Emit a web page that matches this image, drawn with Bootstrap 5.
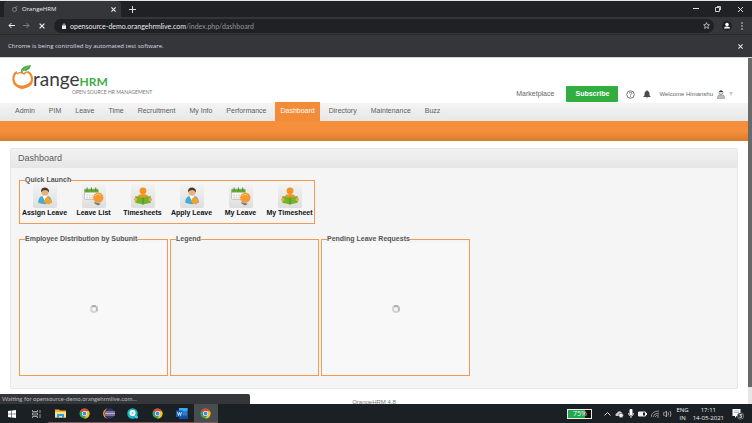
<!DOCTYPE html>
<html lang="en">
<head>
<meta charset="utf-8">
<meta name="viewport" content="width=device-width, initial-scale=1">
<title>OrangeHRM</title>
<link href="https://cdn.jsdelivr.net/npm/bootstrap@5.3.0/dist/css/bootstrap.min.css" rel="stylesheet">
<style>
body{font:7px/10px "Liberation Sans",Arial,sans-serif;color:#666;background:#fff}
button{background:none;border:0;padding:0;color:inherit;line-height:0}
svg{display:block;flex:none}
a{color:inherit;text-decoration:none}
.chrome-ui{font-family:"Open Sans",sans-serif;color:#e8eaed;background:#35363a}
.tabstrip{background:#202124;height:17px;border-top:1px solid #e4e4e4}
.browser-tab{background:#35363a;width:117px;margin-left:4px;border-radius:4px 4px 0 0;font-size:6px}
.toolbar{height:18px;border-bottom:1px solid #292a2d}
.address{background:#202124;border-radius:7px;height:14px;margin-right:8px}
.url-text{font:7px/12px Lato,sans-serif;white-space:nowrap}
.url-text span{color:#92959a}
.infobar{height:22px;font-size:6px;color:#dcdde0}
.viewport-area{min-height:0;border-top:1px solid #d5d5d5}
.site{min-width:0}
.scroll-track{width:4px;background:#e6e6e6}
.scroll-thumb{background:#696969;height:95%}
.site-head{height:45px;padding:6px 15px 0 12px}
.brand-name{font:19px/24px Lato,sans-serif;color:#3a3a3a;padding-top:3px}
.brand-hrm{font-size:12px;color:#3fae49;font-weight:700}
.brand-sub{font:5px/6px Lato,sans-serif;color:#777;margin:-5px 0 0 60px}
.brand-row svg{margin-right:-1px}
.user-links{padding-bottom:1px}
.welcome{font-size:6px}
.subscribe{background:#31ae40;color:#fff;font-weight:700;border-radius:1px;width:52px;height:16px;line-height:10px;margin:0 8px 0 12px}
.main-menu{height:18px;background:linear-gradient(#f4f4f4,#e7e7e7);padding-left:8px}
.main-menu a{padding:0 5px;margin:0 2px;height:19px;line-height:18px;font-size:7px;color:#5d5d5d}
.main-menu a.current{background:#f28c38;color:#fff}
.sub-menu{height:20px;background:linear-gradient(#f58f3b 50%,#d97c2e)}
.panel{margin:7px 10px 0;background:#f5f5f5;border:1px solid #e7e7e7;border-radius:2px}
.panel h1{font-size:9px;line-height:19px;color:#5d5d5d;background:linear-gradient(#f2f2f2,#e6e6e6);padding-left:7px}
.panel-content{padding:8px 8px 12px}
fieldset.framed{border:1px solid #f39a52;padding:0 5px}
fieldset.framed legend{float:none;width:auto;font-size:7px;line-height:8px;font-weight:700;color:#555;margin:0}
.quick{width:296px;height:48px}
.quick-grid{display:grid;grid-template-columns:repeat(6,1fr);margin:0 -5px}
.quick-grid a{color:#111;font-weight:700;white-space:nowrap}
.tile{width:24px;height:24px;border-radius:2px;background:linear-gradient(#f3f3f3,#dedede)}
.widgets{gap:2px;margin-top:11px}
.widget{width:149px;height:141px}
.widget-body{height:100%;margin:0 -5px;background:#f8f8f8}
.spin{width:8px;height:8px;border:2px solid #d4d4d4;border-top-color:#aaa;border-right-color:#bbb;border-radius:50%}
.site-foot{padding-top:8px;color:#777;font-size:6px}
.status-bubble{position:absolute;left:0;bottom:0;width:250px;height:10px;font:6px/10px Lato,sans-serif;color:#b4b8bd;background:#35363a;padding-left:2px;border-radius:0 2px 0 0}
.taskbar{height:19px;background:#1b2024;font-family:"Open Sans",sans-serif;color:#f1f1f1;font-size:6px;line-height:8px}
.apps{width:218px}
.apps button{flex:1 1 0;height:19px;display:flex;align-items:center;justify-content:center}
.apps .running{border-bottom:1px solid #78595c}
.apps .active{background:#494d50}
.battery{width:25px;height:10px;border:1px solid #eee;background:linear-gradient(90deg,#22a84b 75%,#111 75%);line-height:8px;font-size:7px}
.tray{gap:4px}
</style>
</head>
<body class="vh-100 overflow-hidden d-flex flex-column">
<svg class="d-none">
  <defs>
    <symbol id="person" viewBox="0 0 24 24">
      <path d="M4 20q0-7 5-8h6q5 1 5 8-8 3-16 0z" fill="#45acd3"/><path d="M9 12h6l-3 6z" fill="#fff"/>
      <circle cx="12" cy="7.500" r="4" fill="#e9b07c"/><path d="M7.500 8q-1-6 5-6 5 1 4 6-1-3-4-3-4 0-5 3z" fill="#4c3529"/>
      <path d="M12 15l3-2 3 2 2 3-3 4-4-1-2-3z" fill="#f3a32a"/>
    </symbol>
    <symbol id="leave" viewBox="0 0 24 24">
      <rect x="1" y="4" width="16" height="12" rx="1" fill="#fafafa" stroke="#bbb"/><path d="M1 4h16v4H1z" fill="#62a936"/>
      <path d="M4 2v4M9 2v4M14 2v4" stroke="#477d2a"/><path d="M3 11h10M3 14h9" stroke="#bbb" stroke-dasharray="2 1"/>
      <path d="M12 19l8 2-3 2-4-2z" fill="#777"/><circle cx="17" cy="14" r="6" fill="#f49a35"/><path d="M13 12q4-4 7 0" stroke="#ffd08b" fill="none"/>
    </symbol>
    <symbol id="sheet" viewBox="0 0 24 24">
      <circle cx="12" cy="6" r="4" fill="#f39422"/><path d="M5 17q0-7 5-7h4q5 0 5 7z" fill="#f39422"/>
      <path d="M3 12l9 2 9-2v8l-9 2-9-2z" fill="#72b52c"/><path d="M12 14v8" stroke="#43861d"/><circle cx="3.500" cy="16" r="2" fill="#f7a63c"/><circle cx="20.500" cy="16" r="2" fill="#f7a63c"/>
    </symbol>
    <symbol id="chrome" viewBox="0 0 24 24">
      <circle cx="12" cy="12" r="11" fill="#2fa853"/><path d="M12 12L2.500 6.500A11 11 0 0 1 21.500 6.500z" fill="#ea4335"/><path d="M12 7h9.800A11 11 0 0 1 12 23l5-9z" fill="#fbc116"/>
      <circle cx="12" cy="12" r="5.500" fill="#fff"/><circle cx="12" cy="12" r="4.200" fill="#4285f4"/>
    </symbol>
    <symbol id="cross" viewBox="0 0 10 10"><path d="M2 2l6 6M8 2L2 8" stroke="currentColor" stroke-width="1.600"/></symbol>
  </defs>
</svg>

<header class="chrome-ui">
  <div class="tabstrip d-flex justify-content-between">
    <div class="d-flex align-items-stretch">
      <div class="browser-tab d-flex align-items-center ps-2 pe-1">
        <svg width="6" height="6" viewBox="0 0 12 12" fill="none" stroke="#999" stroke-width="1.500"><circle cx="5" cy="7" r="4"/><path d="M6 4q1-3 5-3"/></svg>
        <span class="ms-1 flex-fill">OrangeHRM</span>
        <button aria-label="Close tab"><svg width="7" height="7"><use href="#cross"/></svg></button>
      </div>
      <button class="ms-2" aria-label="New tab"><svg width="7" height="7" viewBox="0 0 7 7" stroke="#ddd"><path d="M3.500 0v7M0 3.500h7"/></svg></button>
    </div>
    <div class="d-flex align-items-center gap-3 pe-2">
      <button aria-label="Minimize"><svg width="6" height="6" viewBox="0 0 6 6" stroke="#ddd"><path d="M0 2.500h6"/></svg></button>
      <button aria-label="Restore"><svg width="6" height="6" viewBox="0 0 6 6" fill="none" stroke="#ccc"><path d="M.5 1.500h4v4h-4zM2 .5h3.500V4"/></svg></button>
      <button aria-label="Close"><svg width="7" height="7" viewBox="0 0 7 7" stroke="#ddd"><path d="M1 1l5 5M6 1L1 6"/></svg></button>
    </div>
  </div>
  <div class="toolbar d-flex align-items-center px-2">
    <button aria-label="Back"><svg width="7" height="7" viewBox="0 0 7 7" stroke="#eee" fill="none"><path d="M7 3.500H1M3.500 1L1 3.500 3.500 6"/></svg></button>
    <button class="ms-2" aria-label="Forward"><svg width="7" height="7" viewBox="0 0 7 7" stroke="#7d8085" fill="none"><path d="M0 3.500h6M3.500 1L6 3.500 3.500 6"/></svg></button>
    <button class="ms-2" aria-label="Stop"><svg width="8" height="8"><use href="#cross"/></svg></button>
    <div class="address d-flex align-items-center flex-fill ms-2 ps-2 pe-1">
      <svg width="4" height="6" viewBox="0 0 4 6"><path d="M0 2.500h4V6H0z" fill="#eee"/><path d="M1 3V1.500q1-1.500 2 0V3" stroke="#eee" stroke-width=".7" fill="none"/></svg>
      <div class="url-text flex-fill ps-1">opensource-demo.orangehrmlive.com<span>/index.php/dashboard</span></div>
      <button aria-label="Bookmark"><svg width="7" height="7" viewBox="0 0 24 24" fill="none" stroke="#ddd" stroke-width="2.500"><path d="M12 2l3 7 7 .6-5.400 4.700L18.500 22 12 18l-6.500 4 1.900-7.700L2 9.600 9 9z"/></svg></button>
    </div>
    <button aria-label="Profile"><svg width="10" height="10" viewBox="0 0 20 20"><circle cx="10" cy="10" r="10" fill="#202124"/><circle cx="10" cy="7" r="3.500" fill="#fff"/><path d="M4 15q0-4 6-4t6 4z" fill="#fff"/></svg></button>
    <button class="ms-2" aria-label="Menu"><svg width="4" height="8" viewBox="0 0 4 8" fill="#ddd"><circle cx="2" cy="1" r=".8"/><circle cx="2" cy="4" r=".8"/><circle cx="2" cy="7" r=".8"/></svg></button>
  </div>
  <div class="infobar d-flex align-items-center justify-content-between px-2">
    <span>Chrome is being controlled by automated test software.</span>
    <button aria-label="Dismiss"><svg width="7" height="7"><use href="#cross"/></svg></button>
  </div>
</header>

<main class="viewport-area d-flex flex-fill position-relative overflow-hidden">
  <div class="site flex-fill">
    <div class="site-head d-flex justify-content-between">
      <div>
        <div class="brand-row d-flex align-items-start">
          <svg width="22" height="26" viewBox="0 0 22 26"><path d="M5 8Q1 10 1.500 16q1 7 9 7.500 9-.5 9.500-7.500 0-6-4-8" fill="none" stroke="#f08a32" stroke-width="2.200"/><path d="M2 16q2 6 9 5.500 6-1 8-5.500-1 8-9 9-7-1-8-9z" fill="#f08a32"/><path d="M5 10q4-3 7 0 3-4 6 0" stroke="#f08a32" stroke-width="1.500" fill="none"/><path d="M9 7q0-5 10-6-1 6-8 6l-1 3z" fill="#42a847"/><path d="M10 7l7-5" stroke="#b5dfad" stroke-width=".6"/></svg>
          <span class="brand-name">range<span class="brand-hrm">HRM</span></span>
        </div>
        <div class="brand-sub">OPEN SOURCE HR MANAGEMENT</div>
      </div>
      <div class="user-links d-flex align-items-end">
        <div class="d-flex align-items-center">
          <a href="#">Marketplace</a>
          <button class="subscribe">Subscribe</button>
          <button aria-label="Help"><svg width="9" height="9" viewBox="0 0 18 18" fill="none" stroke="#555" stroke-width="1.600"><circle cx="9" cy="9" r="7.500"/><path d="M6.500 7q0-2.500 2.500-2.500T11.500 7Q11 8.500 9 9.500V11M9 12.500V14"/></svg></button>
          <button class="ms-2" aria-label="Notifications"><svg width="8" height="9" viewBox="0 0 16 18" fill="#4b4b4b"><path d="M8 0l1.500 2Q13 3 13 7v4l3 3H0l3-3V7q0-4 3.500-5zM6 15h4q-2 3-4 0z"/></svg></button>
          <a href="#" class="welcome ms-2 d-flex align-items-center">Welcome Himanshu
            <svg class="ms-1" width="8" height="9" viewBox="0 0 16 18"><path d="M3 10h10l3 7H0z" fill="#bbb" stroke="#888"/><circle cx="8" cy="5" r="4" fill="#ddd" stroke="#555"/><path d="M4 4q4-6 8 0z" fill="#333"/></svg>
            <svg class="ms-1" width="4" height="4" viewBox="0 0 4 4"><path d="M0 0h4L2 4z" fill="#ccc"/></svg></a>
        </div>
      </div>
    </div>
    <nav class="main-menu d-flex align-items-end">
      <a href="#">Admin</a><a href="#">PIM</a><a href="#">Leave</a><a href="#">Time</a><a href="#">Recruitment</a><a href="#">My Info</a><a href="#">Performance</a><a href="#" class="current" aria-current="page">Dashboard</a><a href="#">Directory</a><a href="#">Maintenance</a><a href="#">Buzz</a>
    </nav>
    <div class="sub-menu"></div>
    <section class="panel">
      <h1 class="m-0 fw-normal">Dashboard</h1>
      <div class="panel-content">
        <fieldset class="framed quick">
          <legend>Quick Launch</legend>
          <div class="quick-grid">
            <a href="#" class="d-flex flex-column align-items-center"><span class="tile"><svg width="24" height="24" viewBox="-2 -2 28 28"><use href="#person" width="24" height="24"/></svg></span>Assign Leave</a>
            <a href="#" class="d-flex flex-column align-items-center"><span class="tile"><svg width="24" height="24" viewBox="-2 -2 28 28"><use href="#leave" width="24" height="24"/></svg></span>Leave List</a>
            <a href="#" class="d-flex flex-column align-items-center"><span class="tile"><svg width="24" height="24" viewBox="-2 -2 28 28"><use href="#sheet" width="24" height="24"/></svg></span>Timesheets</a>
            <a href="#" class="d-flex flex-column align-items-center"><span class="tile"><svg width="24" height="24" viewBox="-2 -2 28 28"><use href="#person" width="24" height="24"/></svg></span>Apply Leave</a>
            <a href="#" class="d-flex flex-column align-items-center"><span class="tile"><svg width="24" height="24" viewBox="-2 -2 28 28"><use href="#leave" width="24" height="24"/></svg></span>My Leave</a>
            <a href="#" class="d-flex flex-column align-items-center"><span class="tile"><svg width="24" height="24" viewBox="-2 -2 28 28"><use href="#sheet" width="24" height="24"/></svg></span>My Timesheet</a>
          </div>
        </fieldset>
        <div class="widgets d-flex">
          <fieldset class="framed widget"><legend>Employee Distribution by Subunit</legend><div class="widget-body d-flex align-items-center justify-content-center"><div class="spin" role="status"></div></div></fieldset>
          <fieldset class="framed widget"><legend>Legend</legend></fieldset>
          <fieldset class="framed widget"><legend>Pending Leave Requests</legend><div class="widget-body d-flex align-items-center justify-content-center"><div class="spin" role="status"></div></div></fieldset>
        </div>
      </div>
    </section>
    <footer class="site-foot text-center">OrangeHRM 4.8</footer>
  </div>
  <div class="scroll-track"><div class="scroll-thumb"></div></div>
  <div class="status-bubble">Waiting for opensource-demo.orangehrmlive.com...</div>
</main>

<footer class="taskbar d-flex justify-content-between align-items-center">
  <div class="apps d-flex">
    <button aria-label="Start"><svg width="8" height="8" viewBox="0 0 8 8" fill="#fff"><path d="M0 1l3.500-.5v3.200H0zM4 .5L8 0v3.700H4zM0 4.200h3.500v3.200L0 7zM4 4.200h4V8l-4-.5z"/></svg></button>
    <button aria-label="Task view"><svg width="9" height="8" viewBox="0 0 9 8" fill="none" stroke="#bbb" stroke-width=".8"><path d="M.5 0v1.500h5V0M.5 8V6.500h5V8M.5 3h5v2h-5zM8 0v3M8 4v4"/></svg></button>
    <button class="running" aria-label="File Explorer"><svg width="11" height="9" viewBox="0 0 22 18"><path d="M0 1h8l2 2h12v14H0z" fill="#f0b832"/><path d="M0 6h22v11H0z" fill="#ffe08a"/><path d="M4 10h14v8h-4v-4H8v4H4z" fill="#3b9ae0"/></svg></button>
    <button class="running" aria-label="Chrome"><svg width="11" height="11"><use href="#chrome"/></svg></button>
    <button class="running" aria-label="Eclipse"><svg width="12" height="11" viewBox="0 0 24 22"><path d="M10 0Q0 3 0 11t10 11Q3 17 3 11T10 0z" fill="#f39a2d"/><circle cx="14" cy="11" r="10" fill="#3c3173"/><path d="M4 8h20M4 11h20M4 14h20" stroke="#ddd" stroke-width="1.500"/></svg></button>
    <button class="running" aria-label="Search app"><svg width="12" height="11" viewBox="0 0 24 22"><circle cx="11" cy="11" r="10.500" fill="#19b5c5"/><circle cx="11" cy="10" r="6" fill="#fff"/><path d="M8 13q0-6 6-6-1 7-6 6zM15 15l4 4" fill="#168a78" stroke="#eee" stroke-width="2"/><circle cx="19" cy="18" r="3" fill="#47c9e7"/></svg></button>
    <button class="running" aria-label="Chrome"><svg width="11" height="11"><use href="#chrome"/></svg></button>
    <button class="running" aria-label="Word"><svg width="12" height="11" viewBox="0 0 24 22"><path d="M6 0h17v22H6z" fill="#2b7cd3"/><path d="M6 0h17v6H6z" fill="#41a5ee"/><path d="M6 15h17v7H6z" fill="#174f9e"/><path d="M0 5h13v13H0z" fill="#185abd"/><path d="M3 8l2 7 2-6 2 6 2-7" stroke="#fff" stroke-width="1.500" fill="none"/></svg></button>
    <button class="running active" aria-label="Chrome, current window"><svg width="11" height="11"><use href="#chrome"/></svg></button>
  </div>
  <div class="tray d-flex align-items-center pe-2">
    <div class="battery text-center me-2">75%</div>
    <svg width="7" height="6" viewBox="0 0 7 6" fill="none" stroke="#ddd"><path d="M.5 4.500l3-3 3 3"/></svg>
    <svg width="9" height="8" viewBox="0 0 18 16"><path d="M2 12q-3-4 2-6 2-5 7-3 3 1 3 4 4 1 2 5z" fill="#ccc"/><circle cx="12" cy="11" r="4.500" fill="#eee" stroke="#333"/></svg>
    <svg width="6" height="9" viewBox="0 0 6 9"><rect x="1.500" width="3" height="6" rx="1" fill="#fff"/><path d="M.5 4q0 3 2.500 3t2.500-3M3 7v2" fill="none" stroke="#fff" stroke-width=".8"/></svg>
    <svg width="9" height="6" viewBox="0 0 9 6"><path d="M.5 1h7v4h-7z" fill="none" stroke="#eee"/><path d="M1 1h4v4H1zM8 2h1v2H8z" fill="#eee"/></svg>
    <svg width="8" height="8" viewBox="0 0 8 8" fill="none" stroke="#aaa" stroke-width=".8"><path d="M0 7Q1 1 8 1M2 7q1-4 6-4M4 7q1-2 4-2M6 7h2"/></svg>
    <svg width="9" height="8" viewBox="0 0 9 8" fill="none" stroke="#bbb" stroke-width=".8"><path d="M0 3h1.500l2-2v6l-2-2H0zM5 2.500q1 1.500 0 3M7 1q2 3 0 6"/></svg>
    <div class="text-center">ENG<br>IN</div>
    <div class="text-center">17:11<br>14-05-2021</div>
    <svg class="ms-1" width="12" height="12" viewBox="0 0 24 24"><path d="M1 2h16v14H9l-3 4v-4H1z" fill="#fff"/><path d="M4 6h10M4 9h10" stroke="#777"/><circle cx="17" cy="16" r="6.500" fill="#34383b" stroke="#aaa"/><path d="M15 13h4l-2 3q3 0 2 2.500-2 1.500-4 0" stroke="#fff" fill="none" stroke-width="1.500"/></svg>
  </div>
</footer>
<script src="https://cdn.jsdelivr.net/npm/bootstrap@5.3.0/dist/js/bootstrap.bundle.min.js"></script>
</body>
</html>
